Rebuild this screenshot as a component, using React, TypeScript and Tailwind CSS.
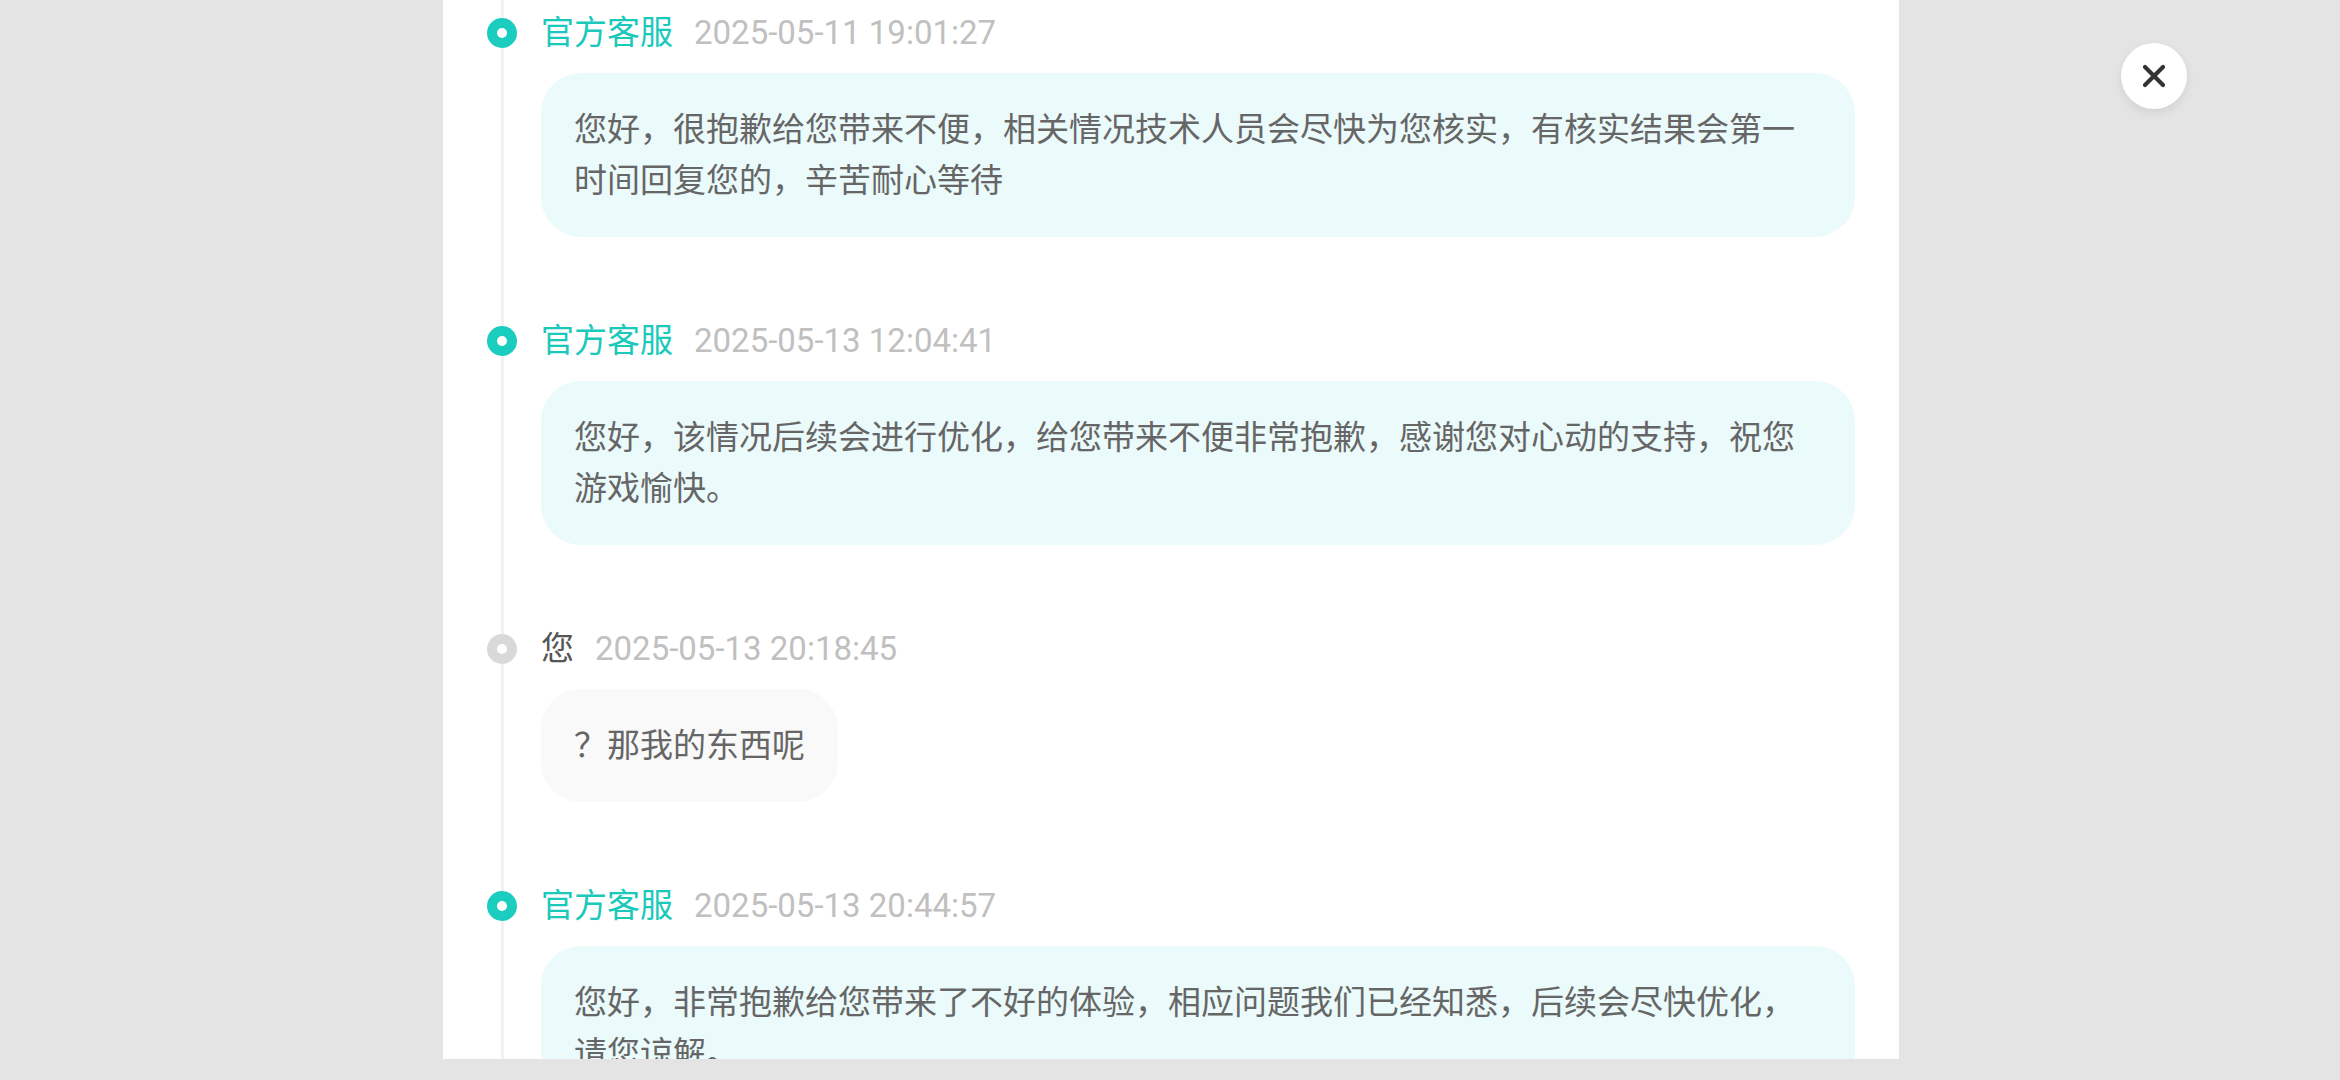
import React from "react";

type Msg = { staff: boolean; name: string; time: string; text: string };

const msgs: Msg[] = [
  {
    staff: true,
    name: "官方客服",
    time: "2025-05-11 19:01:27",
    text: "您好，很抱歉给您带来不便，相关情况技术人员会尽快为您核实，有核实结果会第一时间回复您的，辛苦耐心等待",
  },
  {
    staff: true,
    name: "官方客服",
    time: "2025-05-13 12:04:41",
    text: "您好，该情况后续会进行优化，给您带来不便非常抱歉，感谢您对心动的支持，祝您游戏愉快。",
  },
  {
    staff: false,
    name: "您",
    time: "2025-05-13 20:18:45",
    text: "？那我的东西呢",
  },
  {
    staff: true,
    name: "官方客服",
    time: "2025-05-13 20:44:57",
    text: "您好，非常抱歉给您带来了不好的体验，相应问题我们已经知悉，后续会尽快优化，请您谅解。",
  },
];

function Item({ m }: { m: Msg }) {
  return (
    <div className="relative mb-[79px] flex flex-col">
      <div className="flex h-[50px] items-center">
        <div
          className={
            m.staff
              ? "ml-[44px] flex h-[30px] w-[30px] items-center justify-center rounded-full bg-[#1bcdbf]"
              : "ml-[44px] flex h-[30px] w-[30px] items-center justify-center rounded-full bg-[#d9d9d9]"
          }
        >
          <div className="h-[10px] w-[10px] rounded-full bg-white" />
        </div>
        <span
          className={
            m.staff
              ? "ml-[24px] text-[33px] leading-[50px] text-[#1bc9bb]"
              : "ml-[24px] text-[33px] leading-[50px] text-[#555555]"
          }
        >
          {m.name}
        </span>
        <span className="ml-[21px] text-[33px] leading-[50px] text-[#c0c0c0]">{m.time}</span>
      </div>
      <div className="ml-[98px] mr-[44px] mt-[15px] flex">
        <div
          className={
            m.staff
              ? "rounded-[40px] bg-[#ebfafa] px-[33px] py-[31px] text-[33px] leading-[51px] text-[#666666]"
              : "rounded-[40px] bg-[#f9f9f9] px-[33px] py-[31px] text-[33px] leading-[51px] text-[#666666]"
          }
        >
          {m.text}
        </div>
      </div>
    </div>
  );
}

export default function App() {
  return (
    <div
      className="flex h-[1080px] w-[2340px] items-start overflow-hidden bg-[#e4e4e4] pl-[443px]"
      style={{ fontFamily: "Roboto, 'Noto Sans CJK SC', sans-serif" }}
    >
      <div className="relative h-[1059px] w-[1456px] shrink-0 overflow-hidden bg-white">
        <div className="absolute bottom-0 left-[58px] top-0 w-[3px] bg-[#f2f2f2]" />
        <div className="relative pt-[8px]">
          {msgs.map((m, i) => (
            <Item key={i} m={m} />
          ))}
        </div>
      </div>
      <button className="ml-[222px] mt-[43px] flex h-[66px] w-[66px] shrink-0 items-center justify-center rounded-full bg-white shadow-[0_4px_10px_rgba(0,0,0,0.08)]">
        <svg width="24" height="24" viewBox="0 0 24 24">
          <path d="M3 3 L21 21 M21 3 L3 21" stroke="#333333" strokeWidth="4.2" strokeLinecap="round" fill="none" />
        </svg>
      </button>
    </div>
  );
}
